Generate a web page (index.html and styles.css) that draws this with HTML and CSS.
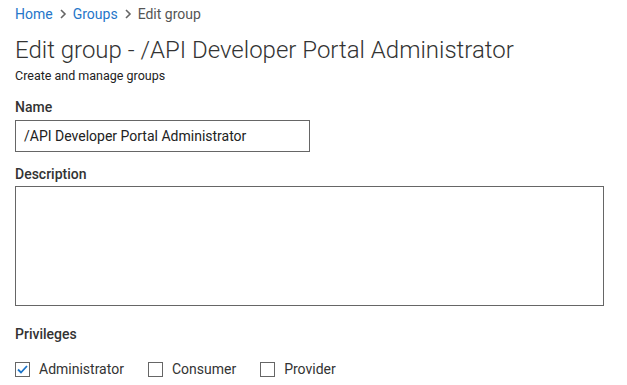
FILE: index.html
```html
<!DOCTYPE html>
<html>
<head>
<meta charset="utf-8">
<link rel="stylesheet" href="styles.css">
</head>
<body>
<div class="page">
  <nav class="crumbs">
    <a class="crumb-link" href="#">Home</a>
    <svg class="chev" width="8" height="10" viewBox="0 0 8 10"><path d="M2 1 L6 5 L2 9" fill="none" stroke="#666" stroke-width="1.6"/></svg>
    <a class="crumb-link" href="#">Groups</a>
    <svg class="chev" width="8" height="10" viewBox="0 0 8 10"><path d="M2 1 L6 5 L2 9" fill="none" stroke="#666" stroke-width="1.6"/></svg>
    <span class="crumb-current">Edit group</span>
  </nav>
  <h1 class="title">Edit group - /API Developer Portal Administrator</h1>
  <p class="subtitle">Create and manage groups</p>

  <div class="field field-name">
    <label class="label">Name</label>
    <div class="input">/API Developer Portal Administrator</div>
  </div>
  <div class="field field-desc">
    <label class="label">Description</label>
    <div class="textarea"></div>
  </div>
  <div class="field field-priv">
    <label class="label">Privileges</label>
    <div class="checks">
      <span class="check">
        <span class="box"><svg width="13" height="13" viewBox="0 0 13 13"><path d="M2 6.5 L5 9.5 L11 3" fill="none" stroke="#1a73c8" stroke-width="1.8"/></svg></span>
        Administrator
      </span>
      <span class="check"><span class="box"></span>Consumer</span>
      <span class="check"><span class="box"></span>Provider</span>
    </div>
  </div>
</div>
</body>
</html>
```
FILE: styles.css
```css
html, body { margin: 0; padding: 0; background: #fff; }
body { font-family: Roboto, "Noto Sans", sans-serif; color: #222; }
.page { padding: 5px 15px 0 15px; }
.crumbs { display: flex; align-items: center; gap: 6px; font-size: 14px; height: 18px; }
.crumb-link { color: #2576c9; text-decoration: none; }
.crumb-current { color: #555; }
.chev { display: block; }
.title { font-size: 24px; font-weight: 300; color: #333; margin: 13px 0 0 0; line-height: 28px; }
.subtitle { font-size: 12.5px; margin: 4px 0 0 0; line-height: 16px; color: #222; }
.field-name { margin-top: 14px; }
.field-desc { margin-top: 13px; }
.field-desc .label { margin-bottom: 3px; }
.field-priv { margin-top: 19px; }
.label { display: block; font-size: 14px; font-weight: 500; color: #333; line-height: 18px; margin-bottom: 4px; }
.input { height: 30px; border: 1px solid #666; font-size: 14px; line-height: 30px; padding: 0 0 0 8px; width: 285px; color: #222; }
.textarea { width: 587px; height: 118px; border: 1px solid #666; }
.checks { display: flex; gap: 24px; margin-top: 18px; font-size: 14px; color: #333; }
.check { display: flex; align-items: center; gap: 9px; }
.box { width: 13px; height: 13px; border: 1px solid #666; display: flex; align-items: center; justify-content: center; }
```
